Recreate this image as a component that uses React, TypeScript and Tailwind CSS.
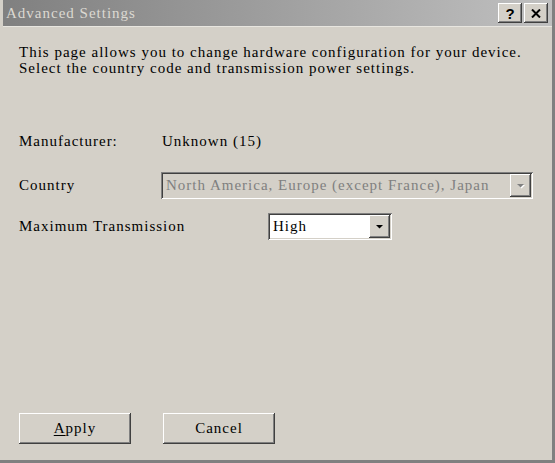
const raised =
  'shadow-[inset_-1px_-1px_#404040,inset_1px_1px_#ffffff,inset_-2px_-2px_#808080,inset_2px_2px_#d4d0c8]'
const sunken =
  'shadow-[inset_1px_1px_#808080,inset_-1px_-1px_#ffffff,inset_2px_2px_#404040,inset_-2px_-2px_#d4d0c8]'

function Arrow({ disabled = false }: { disabled?: boolean }) {
  return (
    <svg width="9" height="6" viewBox="0 0 9 6">
      {disabled && <polygon points="2,2 9,2 5.5,5.5" fill="#ffffff" />}
      <polygon points="1,1 8,1 4.5,4.5" fill={disabled ? '#808080' : '#000000'} />
    </svg>
  )
}

function Combo({
  value,
  width,
  disabled = false,
}: {
  value: string
  width: string
  disabled?: boolean
}) {
  return (
    <div
      className={`${width} h-[27px] ${sunken} ${disabled ? 'bg-[#d4d0c8] text-[#808080]' : 'bg-white text-black'} flex items-center p-[2px]`}
    >
      <span className="flex-1 pl-[3px] whitespace-nowrap overflow-hidden">{value}</span>
      <div className={`w-[21px] h-[23px] bg-[#d4d0c8] ${raised} flex items-center justify-center`}>
        <Arrow disabled={disabled} />
      </div>
    </div>
  )
}

export default function App() {
  return (
    <div
      className="w-[555px] h-[463px] bg-[#d4d0c8] border-r-[3px] border-b-[3px] border-[#808080] pl-[3px] flex flex-col text-[15px] tracking-[1px] text-black"
      style={{ fontFamily: '"Liberation Serif", "Times New Roman", serif' }}
    >
      {/* title bar */}
      <div className="h-[26px] bg-gradient-to-r from-[#808080] to-[#c0c0c0] flex items-center justify-between pl-[3px] pr-[4px]">
        <span className="text-[#dcd9d2] text-[15px]">Advanced Settings</span>
        <div className="flex gap-[2px]">
          <button
            className={`w-[24px] h-[20px] bg-[#d4d0c8] ${raised} flex items-center justify-center font-bold text-[15px] leading-none tracking-normal`}
            style={{ fontFamily: '"Liberation Sans", Arial, sans-serif' }}
          >
            ?
          </button>
          <button className={`w-[24px] h-[20px] bg-[#d4d0c8] ${raised} flex items-center justify-center`}>
            <svg width="10" height="9" viewBox="0 0 10 9">
              <path d="M1 0.5 L9 8.5 M9 0.5 L1 8.5" stroke="#000" strokeWidth="2" />
            </svg>
          </button>
        </div>
      </div>
      <div className="h-[1px] bg-[#e8e6e0]" />

      {/* content */}
      <div className="flex-1 flex flex-col pl-[16px] pr-[18px]">
        <p className="mt-[17px] leading-[16px]">
          This page allows you to change hardware configuration for your device.
          <br />
          Select the country code and transmission power settings.
        </p>

        <div className="mt-[56px] flex items-center h-[18px]">
          <span className="w-[143px]">Manufacturer:</span>
          <span>Unknown (15)</span>
        </div>

        <div className="mt-[22px] flex items-center">
          <span className="w-[142px]">Country</span>
          <Combo value="North America, Europe (except France), Japan" width="w-[372px]" disabled />
        </div>

        <div className="mt-[14px] flex items-center">
          <span className="w-[249px]">Maximum Transmission</span>
          <Combo value="High" width="w-[124px]" />
        </div>

        <div className="mt-auto mb-[16px] flex gap-[32px]">
          <button className={`w-[112px] h-[31px] bg-[#d4d0c8] ${raised}`}>
            <span className="underline underline-offset-2">A</span>pply
          </button>
          <button className={`w-[112px] h-[31px] bg-[#d4d0c8] ${raised}`}>Cancel</button>
        </div>
      </div>
    </div>
  )
}
